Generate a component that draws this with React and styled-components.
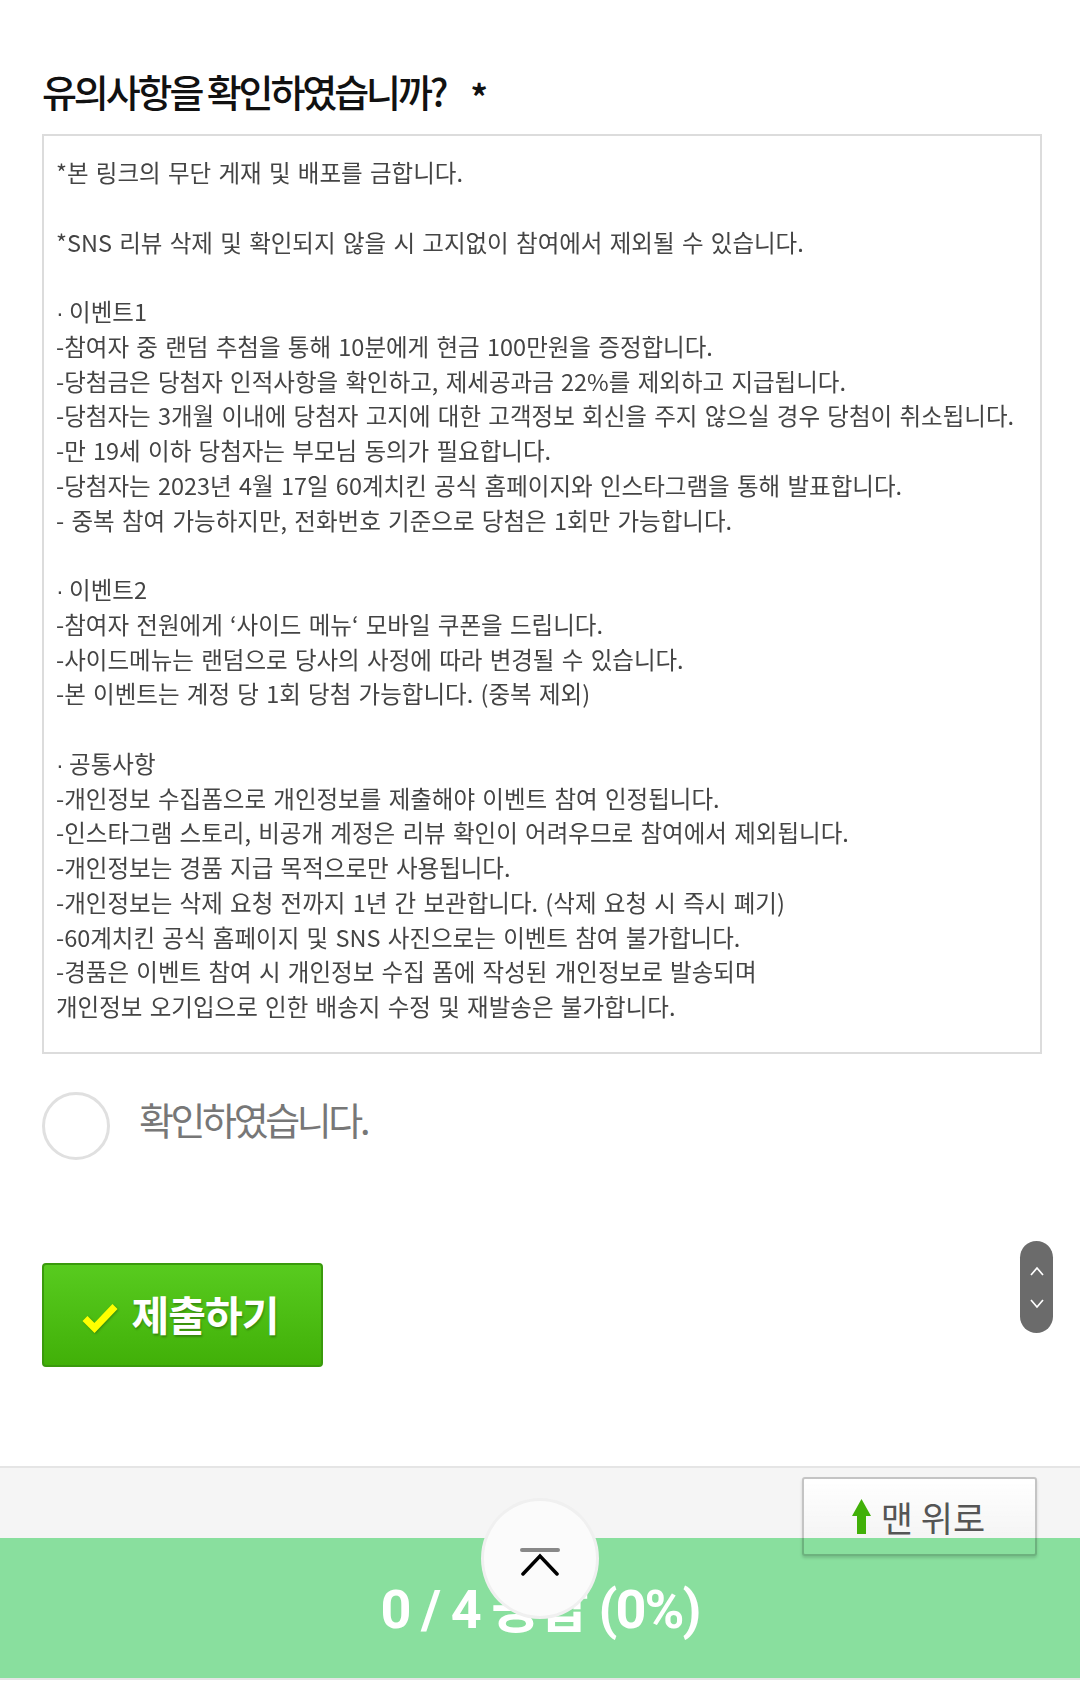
import React from 'react';
import styled, { createGlobalStyle } from 'styled-components';

const FONT = '"Noto Sans CJK KR", "Noto Sans", sans-serif';

const GlobalStyle = createGlobalStyle`
    html, body {
        margin: 0;
        padding: 0;
        background: #fff;
        font-family: ${FONT};
    }
`;

const Page = styled.div`
    position: relative;
    width: 1080px;
    height: 1685px;
    display: flex;
    flex-direction: column;
    overflow: hidden;
    background: #fff;
`;

const Form = styled.main`
    flex: 1;
    padding: 66px 38px 0 42px;
`;

const Title = styled.h2`
    margin: 0 0 18px;
    height: 50px;
    font-size: 38px;
    line-height: 50px;
    font-weight: 500;
    letter-spacing: -3.1px;
    color: #111;
    white-space: pre;
`;

const Required = styled.span`
    margin-left: 25px;
    font-size: 34px;
    letter-spacing: 0;
    font-weight: 700;
    vertical-align: -3px;
`;

const NoticeBox = styled.div`
    box-sizing: border-box;
    height: 920px;
    padding: 19px 14px 0 12px;
    border: 2px solid #dcdcdc;
`;

const NoticeText = styled.div`
    font-size: 23.5px;
    line-height: 34.75px;
    letter-spacing: 0;
    word-spacing: 2px;
    color: #444;
    white-space: pre;
    filter: blur(0.35px);
`;

const NoticeLine = styled.div`
    height: 34.75px;
`;

const Bullet = styled.span`
    margin-right: -2px;
    font-family: "Liberation Sans", sans-serif;
`;

const ConfirmRow = styled.label`
    display: flex;
    align-items: flex-start;
    gap: 29px;
    margin-top: 38px;
`;

const Radio = styled.span`
    box-sizing: border-box;
    width: 68px;
    height: 68px;
    border: 3px solid #e0e0e0;
    border-radius: 50%;
`;

const ConfirmText = styled.span`
    font-size: 38px;
    line-height: 54px;
    letter-spacing: -3.4px;
    color: #777;
`;

const SubmitButton = styled.button`
    display: flex;
    align-items: center;
    justify-content: center;
    gap: 14px;
    box-sizing: border-box;
    width: 281px;
    height: 104px;
    margin-top: 103px;
    padding: 0 5px 4px 0;
    border: 2px solid #3a9a0c;
    border-radius: 4px;
    background: linear-gradient(#58cb1f, #41b008);
    color: #fff;
    font-family: ${FONT};
    font-size: 41px;
    font-weight: 700;
    letter-spacing: -1px;
    text-shadow: 1px 2px 2px rgba(0, 0, 0, 0.25);
`;

const CheckMark = styled.svg`
    margin-top: 10px;
    filter: drop-shadow(1px 1px 1px rgba(0, 0, 0, 0.25));
`;

const BackBand = styled.div`
    height: 72px;
    border-top: 2px solid #e5e5e5;
    box-sizing: border-box;
    background: #f5f5f5;
`;

const ProgressBar = styled.div`
    box-sizing: border-box;
    height: 142px;
    margin-bottom: 5px;
    padding-bottom: 8px;
    border-bottom: 2px solid #e5e5e5;
    display: flex;
    align-items: center;
    justify-content: center;
    background: #89df9e;
    color: #fff;
    font-family: "Roboto", ${FONT};
    font-size: 54px;
    font-weight: 700;
    letter-spacing: -1.9px;
`;

const ScrollPill = styled.div`
    position: absolute;
    left: 1020px;
    top: 1241px;
    width: 33px;
    height: 92px;
    border-radius: 17px;
    background: #6b6b6b;
    display: flex;
    flex-direction: column;
    align-items: center;
    justify-content: center;
    gap: 21px;
`;

const BackToTop = styled.button`
    position: absolute;
    left: 802px;
    top: 1477px;
    box-sizing: border-box;
    width: 235px;
    height: 79px;
    padding: 0 2px 0 0;
    display: flex;
    align-items: center;
    justify-content: center;
    gap: 10px;
    border: 2px solid rgba(0, 0, 0, 0.2);
    border-radius: 3px;
    background: linear-gradient(#fff, rgba(255, 255, 255, 0) 78%) padding-box;
    box-shadow: 0 2px 3px rgba(0, 0, 0, 0.15);
    color: #555;
    font-family: ${FONT};
    font-size: 35px;
`;

const TopCircle = styled.button`
    position: absolute;
    left: 481px;
    top: 1498px;
    box-sizing: border-box;
    width: 118px;
    height: 121px;
    padding: 0;
    border: 3px solid #f0f0f0;
    border-radius: 50%;
    background: #fbfbfb;
    display: flex;
    align-items: center;
    justify-content: center;
`;

const TopIcon = styled.svg`
    margin-top: 7px;
`;

const NOTICE = [
    '*본 링크의 무단 게재 및 배포를 금합니다.',
    '',
    '*SNS 리뷰 삭제 및 확인되지 않을 시 고지없이 참여에서 제외될 수 있습니다.',
    '',
    '· 이벤트1',
    '-참여자 중 랜덤 추첨을 통해 10분에게 현금 100만원을 증정합니다.',
    '-당첨금은 당첨자 인적사항을 확인하고, 제세공과금 22%를 제외하고 지급됩니다.',
    '-당첨자는 3개월 이내에 당첨자 고지에 대한 고객정보 회신을 주지 않으실 경우 당첨이 취소됩니다.',
    '-만 19세 이하 당첨자는 부모님 동의가 필요합니다.',
    '-당첨자는 2023년 4월 17일 60계치킨 공식 홈페이지와 인스타그램을 통해 발표합니다.',
    '- 중복 참여 가능하지만, 전화번호 기준으로 당첨은 1회만 가능합니다.',
    '',
    '· 이벤트2',
    '-참여자 전원에게 ‘사이드 메뉴‘ 모바일 쿠폰을 드립니다.',
    '-사이드메뉴는 랜덤으로 당사의 사정에 따라 변경될 수 있습니다.',
    '-본 이벤트는 계정 당 1회 당첨 가능합니다. (중복 제외)',
    '',
    '· 공통사항',
    '-개인정보 수집폼으로 개인정보를 제출해야 이벤트 참여 인정됩니다.',
    '-인스타그램 스토리, 비공개 계정은 리뷰 확인이 어려우므로 참여에서 제외됩니다.',
    '-개인정보는 경품 지급 목적으로만 사용됩니다.',
    '-개인정보는 삭제 요청 전까지 1년 간 보관합니다. (삭제 요청 시 즉시 폐기)',
    '-60계치킨 공식 홈페이지 및 SNS 사진으로는 이벤트 참여 불가합니다.',
    '-경품은 이벤트 참여 시 개인정보 수집 폼에 작성된 개인정보로 발송되며',
    '개인정보 오기입으로 인한 배송지 수정 및 재발송은 불가합니다.',
];

export default function App() {
    return (
        <Page>
            <GlobalStyle />
            <Form>
                <Title>유의사항을 확인하였습니까?<Required>*</Required></Title>
                <NoticeBox>
                    <NoticeText>
                        {NOTICE.map((line, i) => (
                            <NoticeLine key={i + ''}>
                                {line.startsWith('· ')
                                    ? <><Bullet>·</Bullet>{line.slice(1)}</>
                                    : line}
                            </NoticeLine>
                        ))}
                    </NoticeText>
                </NoticeBox>
                <ConfirmRow>
                    <Radio />
                    <ConfirmText>확인하였습니다.</ConfirmText>
                </ConfirmRow>
                <SubmitButton>
                    <CheckMark width="36" height="30" viewBox="0 0 36 30">
                        <path d="M3 15.5 L12.5 25 L33 3.5" fill="none" stroke="#ffff00" strokeWidth="7" />
                    </CheckMark>
                    제출하기
                </SubmitButton>
            </Form>
            <BackBand />
            <ProgressBar>0 / 4 응답 (0%)</ProgressBar>
            <ScrollPill>
                <svg width="16" height="11" viewBox="0 0 16 11">
                    <path d="M2 9 L8 2 L14 9" fill="none" stroke="#fff" strokeWidth="1.7" />
                </svg>
                <svg width="16" height="11" viewBox="0 0 16 11">
                    <path d="M2 2 L8 9 L14 2" fill="none" stroke="#fff" strokeWidth="1.7" />
                </svg>
            </ScrollPill>
            <BackToTop>
                <svg width="19" height="35" viewBox="0 0 19 35">
                    <path d="M9.5 0 L19 17 L14 17 L14 35 L5 35 L5 17 L0 17 Z" fill="#41b008" />
                </svg>
                맨 위로
            </BackToTop>
            <TopCircle>
                <TopIcon width="40" height="28" viewBox="0 0 40 28">
                    <path d="M2 2 H38" stroke="#888" strokeWidth="4" strokeLinecap="round" />
                    <path d="M3 26 L20 8 L37 26" fill="none" stroke="#000" strokeWidth="3.5" strokeLinecap="round" />
                </TopIcon>
            </TopCircle>
        </Page>
    );
}
